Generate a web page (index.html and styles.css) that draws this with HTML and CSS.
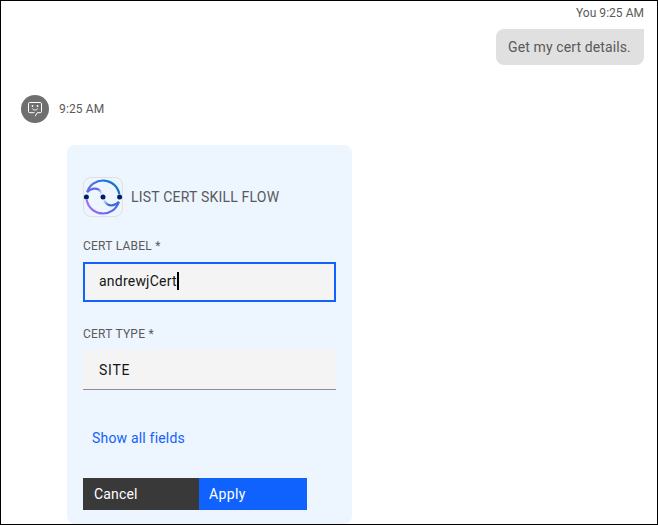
FILE: index.html
```html
<!DOCTYPE html>
<html lang="en">
<head>
<meta charset="utf-8">
<title>Chat</title>
<link rel="stylesheet" href="styles.css">
</head>
<body>
<main class="chat">
  <section class="outgoing">
    <div class="stamp stamp-you">You 9:25 AM</div>
    <div class="bubble">Get my cert details.</div>
  </section>
  <section class="incoming">
    <header class="sender">
      <svg class="avatar" viewBox="0 0 28 28" fill="none">
        <circle cx="14" cy="14" r="14" fill="#6f6f6f"/>
        <path d="M14.2 21.2l2.1-3.5h2.9a1.3 1.3 0 0 0 1.300-1.300V8.800a1.300 1.300 0 0 0-1.300-1.300H8.800a1.300 1.300 0 0 0-1.300 1.300v7.600a1.300 1.300 0 0 0 1.300 1.300h4.700" stroke="#fff"/>
        <path d="M11.300 13.500c.8 2 4.600 2 5.400 0" stroke="#fff"/>
        <circle cx="11.500" cy="11" r=".9" fill="#fff"/>
        <circle cx="16.500" cy="11" r=".9" fill="#fff"/>
      </svg>
      <span class="stamp stamp-bot">9:25 AM</span>
    </header>
    <form class="card">
      <div class="card-head">
        <div class="logo">
          <svg viewBox="0 0 40 40" fill="none">
            <defs>
              <linearGradient id="top" gradientUnits="userSpaceOnUse" x1="4" y1="18" x2="36" y2="14"><stop stop-color="#6a6ee8"/><stop offset=".6" stop-color="#1976d8"/><stop offset="1" stop-color="#0f72cf"/></linearGradient>
              <linearGradient id="bottom" gradientUnits="userSpaceOnUse" x1="4" y1="30" x2="36" y2="24"><stop stop-color="#a070ff"/><stop offset=".5" stop-color="#7564f2"/><stop offset="1" stop-color="#4169dd"/></linearGradient>
              <linearGradient id="fadeRight" gradientUnits="userSpaceOnUse" x1="4" y1="12" x2="19" y2="18"><stop stop-color="#6a6ee8"/><stop offset=".6" stop-color="#5968dd"/><stop offset="1" stop-color="#5968dd" stop-opacity="0"/></linearGradient>
              <linearGradient id="fadeLeft" gradientUnits="userSpaceOnUse" x1="21" y1="21" x2="35" y2="27"><stop stop-color="#4169dd" stop-opacity="0"/><stop offset=".4" stop-color="#4169dd"/><stop offset="1" stop-color="#4169dd"/></linearGradient>
            </defs>
            <path d="M4.200 15A16.600 16.600 0 0 1 36.300 17" stroke="url(#top)" stroke-width="2.200"/>
            <path d="M3.700 23A16.600 16.600 0 0 0 35.800 25" stroke="url(#bottom)" stroke-width="2.200"/>
            <path d="M4 15.300C7.500 11 14.500 10.300 17.500 14.300c.8 1.100 1.500 2.400 2 3.700" stroke="url(#fadeRight)" stroke-width="2.200"/>
            <path d="M20.500 22c.5 1.300 1.200 2.600 2 3.700 3 4 10 3.300 13.500-1" stroke="url(#fadeLeft)" stroke-width="2.200"/>
            <circle cx="3.400" cy="20" r="2.500" fill="#001d6c"/>
            <circle cx="20" cy="20" r="2.500" fill="#001d6c"/>
            <circle cx="36.600" cy="20" r="2.500" fill="#001d6c"/>
          </svg>
        </div>
        <h1 class="title">LIST CERT SKILL FLOW</h1>
      </div>
      <div class="field">
        <span class="label label-first">CERT LABEL *</span>
        <div class="input input-focused"><span class="value-name">andrewjCert</span><i class="caret"></i></div>
      </div>
      <div class="field field-type">
        <span class="label label-second">CERT TYPE *</span>
        <div class="input"><span class="value-type">SITE</span></div>
      </div>
      <a class="more">Show all fields</a>
      <div class="actions">
        <button type="button" class="button cancel">Cancel</button>
        <button type="button" class="button apply">Apply</button>
      </div>
    </form>
  </section>
</main>
</body>
</html>
```

FILE: styles.css
```css
* { box-sizing: border-box; }
html, body { height: 100%; }
body {
  margin: 0;
  overflow: hidden;
  background: #fff;
  color: #5a5a5a;
  font: 14px/18px Roboto, "Liberation Sans", sans-serif;
}
.chat {
  height: 100%;
  overflow: hidden;
  border: 1px solid #000;
}
.outgoing {
  display: flex;
  flex-direction: column;
  align-items: flex-end;
  padding: 4px 13px 0 0;
}
.stamp { font-size: 12px; line-height: 16px; white-space: nowrap; }
.stamp-you { letter-spacing: 0.03px; }
.stamp-bot { letter-spacing: 0.15px; }
.bubble {
  width: 148px;
  height: 36px;
  margin-top: 8px;
  padding: 9px 0 9px 12px;
  border-radius: 8px 0 8px 8px;
  background: #e0e0e0;
  letter-spacing: 0.12px;
  white-space: nowrap;
}
.sender {
  display: flex;
  align-items: center;
  gap: 10px;
  margin: 30px 0 0 20px;
}
.avatar { display: block; width: 28px; height: 28px; }
.card {
  width: 285px;
  height: 379px;
  margin: 22px 0 0 66px;
  padding: 32px 16px 0;
  border-radius: 8px;
  background: #edf5ff;
}
.card-head { display: flex; align-items: center; gap: 8px; }
.logo {
  width: 40px;
  height: 40px;
  border: 1px solid #e0e0e0;
  border-radius: 8px;
}
.logo svg { display: block; width: 40px; height: 40px; margin: -1px; }
.title { margin: 0; font-size: 14px; font-weight: 400; letter-spacing: 0.2px; white-space: nowrap; }
.field { margin-top: 21px; }
.field-type { margin-top: 24px; }
.label { display: block; height: 16px; margin-bottom: 8px; font-size: 12px; line-height: 16px; }
.label-first, .label-second { letter-spacing: 0.24px; }
.input {
  display: flex;
  align-items: center;
  height: 40px;
  padding: 0 16px;
  border-bottom: 1px solid #8d8d8d;
  background: #f4f4f4;
  color: #161616;
}
.input-focused { padding: 0 14px 2px; border: 2px solid #0f62fe; }
.value-name { letter-spacing: 0.22px; }
.value-type { letter-spacing: 0.75px; }
.caret { width: 2px; height: 18px; background: #000; }
.more {
  display: block;
  margin: 39px 0 0 9px;
  color: #0f62fe;
  letter-spacing: 0.19px;
}
.actions { display: flex; margin-top: 31px; }
.button {
  height: 32px;
  padding: 0 11px;
  border: 0;
  border-radius: 0;
  color: #fff;
  font: inherit;
  text-align: left;
  letter-spacing: 0.15px;
}
.cancel { width: 116px; background: #393939; }
.apply { width: 108px; padding-left: 10px; letter-spacing: 0.35px; background: #0f62fe; }
```
